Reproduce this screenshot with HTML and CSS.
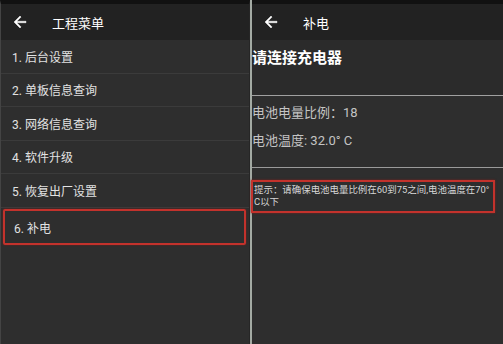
FILE: index.html
```html
<!DOCTYPE html>
<html lang="zh">
<head>
  <meta charset="UTF-8" />
  <meta name="viewport" content="width=device-width, initial-scale=1.0"/>
  <title>工程菜单 - 补电</title>
  <link rel="stylesheet" href="styles.css">
</head>
<body>
  <div class="screen">
    <!-- 工程菜单 -->
    <section class="panel menu">
      <header class="toolbar">
        <svg class="back" viewBox="0 0 24 24"><path d="M20 11H7.83l5.59-5.59L12 4l-8 8 8 8 1.41-1.41L7.83 13H20v-2z"/></svg>
        <span class="title">工程菜单</span>
      </header>
      <ul class="menu-list">
        <li>1. 后台设置</li>
        <li>2. 单板信息查询</li>
        <li>3. 网络信息查询</li>
        <li>4. 软件升级</li>
        <li>5. 恢复出厂设置</li>
        <li class="marked">6. 补电</li>
      </ul>
    </section>

    <div class="divider"></div>

    <!-- 补电 -->
    <section class="panel charge">
      <header class="toolbar">
        <svg class="back" viewBox="0 0 24 24"><path d="M20 11H7.83l5.59-5.59L12 4l-8 8 8 8 1.41-1.41L7.83 13H20v-2z"/></svg>
        <span class="title">补电</span>
      </header>
      <div class="charge-head">
        <h2>请连接充电器</h2>
      </div>
      <div class="charge-info">
        <p>电池电量比例：18</p>
        <p>电池温度: 32.0° C</p>
      </div>
      <p class="tip">提示：请确保电池电量比例在60到75之间,电池温度在70°<br>C以下</p>
    </section>
  </div>
</body>
</html>
```

FILE: styles.css
```css
body {
  margin: 0;
  background: #2e2e2e;
  font-family: Roboto, "Noto Sans CJK SC", sans-serif;
}

.screen {
  display: flex;
  height: 344px;
  overflow: hidden;
}

.panel {
  background: #2e2e2e;
  border-top: 4px solid #111;
}

.menu {
  width: 250px;
  box-sizing: border-box;
  border-left: 1px solid #444;
  border-right: 1px solid #262626;
}

.divider {
  width: 2px;
  background: #a3aaa3;
}

.charge {
  flex: 1;
}

.toolbar {
  height: 36px;
  background: #222;
  display: flex;
  align-items: center;
  gap: 23px;
  padding-left: 10px;
  color: #fff;
  font-size: 13px;
}

.back {
  width: 18px;
  height: 18px;
  fill: #fff;
  stroke: #fff;
  stroke-width: 0.6;
}

.menu-list {
  list-style: none;
  margin: 0;
  padding: 0;
}

.menu-list li {
  height: 33.5px;
  box-sizing: border-box;
  border-bottom: 1px solid #3b3b3b;
  padding-left: 11px;
  display: flex;
  align-items: center;
  font-size: 12px;
  color: #e2e2e2;
}

.menu-list li.marked {
  height: 36px;
  margin: 1.5px 3px 0 2px;
  border: 2px solid #c3322c;
  border-radius: 2px;
  padding-left: 9px;
  box-shadow: 0 0 2px #7a201c;
}

.charge-head {
  height: 56px;
  box-sizing: border-box;
  padding-top: 8px;
  background: #2b2b2b;
  border-bottom: 1px solid #a0a0a0;
}

.charge-head h2 {
  margin: 0;
  font-size: 15px;
  line-height: 20px;
  color: #fff;
}

.charge-info {
  padding: 8px 0 17px;
  border-bottom: 1px solid #9a9a9a;
}

.charge-info p {
  margin: 0;
  font-size: 13px;
  line-height: 18px;
  color: #c4c4c4;
}

.charge-info p + p {
  margin-top: 10px;
}

.tip {
  margin: 12px 8px 0 -1px;
  padding: 2px 0 3px 1px;
  border: 2px solid #c3322c;
  box-shadow: 0 0 2px #7a201c;
  font-size: 9.45px;
  line-height: 12px;
  color: #d6d6d6;
  white-space: nowrap;
}
```
